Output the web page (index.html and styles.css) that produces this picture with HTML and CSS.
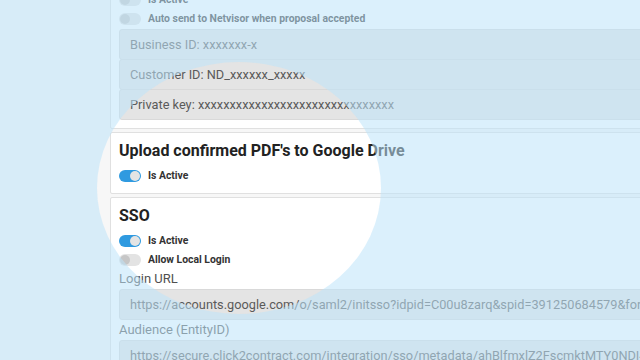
FILE: index.html
```html
<!DOCTYPE html>
<html lang="en">
<head>
    <meta charset="UTF-8">
    <meta name="viewport" content="width=device-width, initial-scale=1.0">
    <title>Integrations</title>
    <link rel="stylesheet" href="styles.css">
</head>
<body>
    <div class="page">
        <div class="card">
            <h2>Netvisor</h2>
            <div class="toggle-row"><span class="toggle"></span>Is Active</div>
            <div class="toggle-row"><span class="toggle"></span>Auto send to Netvisor when proposal accepted</div>
            <div class="fields">
                <div class="field">Business ID: xxxxxxx-x</div>
                <div class="field">Customer ID: ND_xxxxxx_xxxxx</div>
                <div class="field">Private key: xxxxxxxxxxxxxxxxxxxxxxxxxxxxxxx</div>
            </div>
        </div>

        <div class="card">
            <h2>Upload confirmed PDF's to Google Drive</h2>
            <div class="toggle-row"><span class="toggle on"></span>Is Active</div>
        </div>

        <div class="card">
            <h2>SSO</h2>
            <div class="toggle-row"><span class="toggle on"></span>Is Active</div>
            <div class="toggle-row"><span class="toggle"></span>Allow Local Login</div>
            <div class="label">Login URL</div>
            <div class="field">https://accounts.google.com/o/saml2/initsso?idpid=C00u8zarq&amp;spid=391250684579&amp;forceauthn=false</div>
            <div class="label">Audience (EntityID)</div>
            <div class="field">https://secure.click2contract.com/integration/sso/metadata/ahBlfmxlZ2FscmktMTY0NDI4MjQwOTc</div>
        </div>
    </div>

    <!-- spotlight over the page -->
    <div class="spotlight"></div>
</body>
</html>
```

FILE: styles.css
```css
* {
    box-sizing: border-box;
}

body {
    margin: 0;
    background: #f7f7f7;
    font-family: Roboto, 'Liberation Sans', sans-serif;
    overflow: hidden;
    height: 360px;
}

.page {
    margin: -44px 0 0 110px;
    width: 640px;
}

.card {
    background: #ffffff;
    border: 1px solid #e0e0e0;
    border-radius: 2px;
    padding: 8px;
    margin-bottom: 3px;
}

.card h2 {
    margin: 0 0 5px;
    font-size: 16px;
    line-height: 20px;
    font-weight: 700;
    color: #222222;
}

.toggle-row {
    display: flex;
    align-items: center;
    gap: 7px;
    height: 19px;
    font-size: 10.4px;
    font-weight: 700;
    color: #333333;
}

.toggle {
    display: flex;
    align-items: center;
    width: 22px;
    height: 12px;
    padding: 1px;
    border-radius: 6px;
    background: #e3e3e3;
}

.toggle::after {
    content: '';
    width: 10px;
    height: 10px;
    border-radius: 50%;
    background: #c6c6c6;
}

.toggle.on {
    background: #2f9ae0;
    justify-content: flex-end;
}

.toggle.on::after {
    background: #e4e4e4;
}

.fields {
    margin-top: 1px;
}

.field {
    height: 31px;
    padding: 0 10px;
    border: 1px solid #d9d9d9;
    border-radius: 3px;
    background: #e4e4e4;
    font-size: 12.75px;
    line-height: 29px;
    color: #5a5a5a;
    white-space: nowrap;
    overflow: hidden;
}

.field + .field {
    margin-top: -1px;
}

.label {
    margin: 2px 0;
    font-size: 13px;
    line-height: 16px;
    color: #4f4f4f;
}

.spotlight {
    position: absolute;
    left: 97px;
    top: 62px;
    width: 284px;
    height: 252px;
    border-radius: 50%;
    box-shadow: 0 0 0 1000px rgba(190, 228, 250, 0.55);
    pointer-events: none;
}
```
